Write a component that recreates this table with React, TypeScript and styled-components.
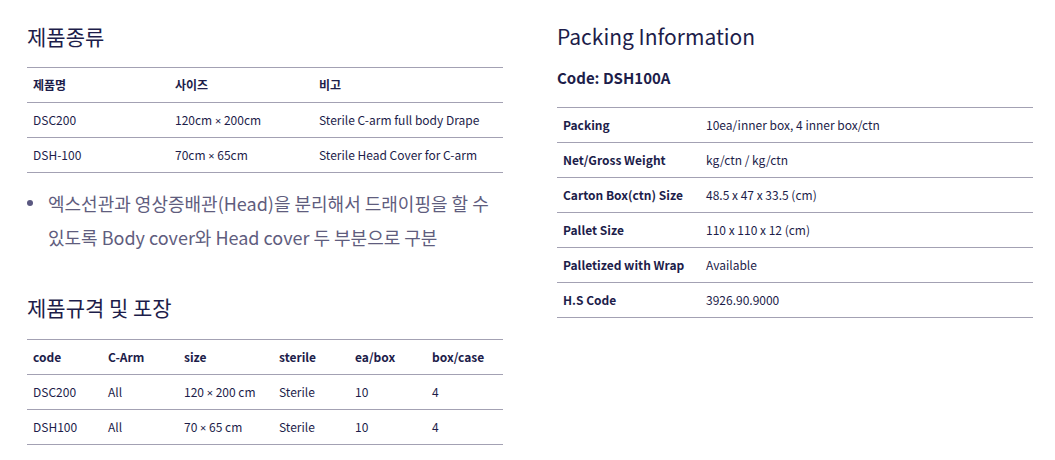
import React from 'react';
import styled, {createGlobalStyle} from 'styled-components';

const GlobalStyle = createGlobalStyle`
  html, body {
    margin: 0;
    padding: 0;
    background: #fff;
  }
  body {
    font-family: "Noto Sans CJK KR", "Noto Sans", sans-serif;
    color: #1d1d4a;
  }
`;

const Page = styled.div`
  display: flex;
  gap: 54px;
  padding: 18px 21px 0 27px;
`;

const Column = styled.div`
  width: 476px;
  display: flex;
  flex-direction: column;
`;

const Heading = styled.h2`
  margin: 0;
  font-size: 21px;
  font-weight: 400;
  line-height: 36px;
  color: #1d1d4a;
`;

const SubHeading = styled.h3`
  margin: 12px 0 0;
  font-size: 15px;
  font-weight: 700;
  line-height: 24px;
  color: #1d1d4a;
`;

const Table = styled.table<{$top: number}>`
  width: 100%;
  margin-top: ${p => p.$top}px;
  border-collapse: collapse;
  border-top: 1px solid #a3a1b3;
  font-size: 12px;
  line-height: 20px;
  color: #1d1d4a;
  th, td {
    text-align: left;
    padding: 7px 6px;
    border-bottom: 1px solid #a3a1b3;
    vertical-align: middle;
    white-space: nowrap;
  }
  th {
    font-weight: 700;
  }
  td {
    font-weight: 400;
  }
`;

const LabelCell = styled.th`
  width: 131px;
`;

const Times = styled.span`
  font-family: "Noto Sans", sans-serif;
  font-size: 11px;
  line-height: 1;
`;

const Notes = styled.ul`
  margin: 13px 0 0;
  padding: 0;
  list-style: none;
`;

const Note = styled.li`
  display: flex;
  align-items: flex-start;
  font-size: 18px;
  line-height: 34px;
  color: #5f5d7e;
`;

const Dot = styled.span`
  flex: none;
  width: 6px;
  height: 6px;
  margin: 14px 15px 0 0;
  border-radius: 50%;
  background: #5a5880;
`;

const SecondHeading = styled(Heading)`
  margin-top: 35px;
`;

const by = (a: string, b: string) => <>{a} <Times>×</Times> {b}</>;

const types = [
  {name: 'DSC200', size: by('120cm', '200cm'), note: 'Sterile C-arm full body Drape'},
  {name: 'DSH-100', size: by('70cm', '65cm'), note: 'Sterile Head Cover for C-arm'},
];

const specs = [
  {code: 'DSC200', arm: 'All', size: by('120', '200 cm'), sterile: 'Sterile', ea: '10', box: '4'},
  {code: 'DSH100', arm: 'All', size: by('70', '65 cm'), sterile: 'Sterile', ea: '10', box: '4'},
];

const packing = [
  ['Packing', '10ea/inner box, 4 inner box/ctn'],
  ['Net/Gross Weight', 'kg/ctn / kg/ctn'],
  ['Carton Box(ctn) Size', '48.5 x 47 x 33.5 (cm)'],
  ['Pallet Size', '110 x 110 x 12 (cm)'],
  ['Palletized with Wrap', 'Available'],
  ['H.S Code', '3926.90.9000'],
];

const typeWidths = [142, 144];
const specWidths = [75, 76, 95, 76, 77];

const App = () => {
  return (
    <>
      <GlobalStyle/>
      <Page>
        <Column>
          <Heading>제품종류</Heading>
          <Table $top={13}>
            <colgroup>
              {typeWidths.map((w, i) => <col key={i} style={{width: w}}/>)}
              <col/>
            </colgroup>
            <thead>
              <tr>
                <th>제품명</th>
                <th>사이즈</th>
                <th>비고</th>
              </tr>
            </thead>
            <tbody>
              {types.map(t => (
                <tr key={t.name}>
                  <td>{t.name}</td>
                  <td>{t.size}</td>
                  <td>{t.note}</td>
                </tr>
              ))}
            </tbody>
          </Table>
          <Notes>
            <Note>
              <Dot/>
              <span>엑스선관과 영상증배관(Head)을 분리해서 드래이핑을 할 수 있도록 Body cover와 Head cover 두 부분으로 구분</span>
            </Note>
          </Notes>
          <SecondHeading>제품규격 및 포장</SecondHeading>
          <Table $top={14}>
            <colgroup>
              {specWidths.map((w, i) => <col key={i} style={{width: w}}/>)}
              <col/>
            </colgroup>
            <thead>
              <tr>
                <th>code</th>
                <th>C-Arm</th>
                <th>size</th>
                <th>sterile</th>
                <th>ea/box</th>
                <th>box/case</th>
              </tr>
            </thead>
            <tbody>
              {specs.map(s => (
                <tr key={s.code}>
                  <td>{s.code}</td>
                  <td>{s.arm}</td>
                  <td>{s.size}</td>
                  <td>{s.sterile}</td>
                  <td>{s.ea}</td>
                  <td>{s.box}</td>
                </tr>
              ))}
            </tbody>
          </Table>
        </Column>
        <Column>
          <Heading>Packing Information</Heading>
          <SubHeading>Code: DSH100A</SubHeading>
          <Table $top={17}>
            <tbody>
              {packing.map(([label, value]) => (
                <tr key={label}>
                  <LabelCell>{label}</LabelCell>
                  <td>{value}</td>
                </tr>
              ))}
            </tbody>
          </Table>
        </Column>
      </Page>
    </>
  );
};

export default App;
